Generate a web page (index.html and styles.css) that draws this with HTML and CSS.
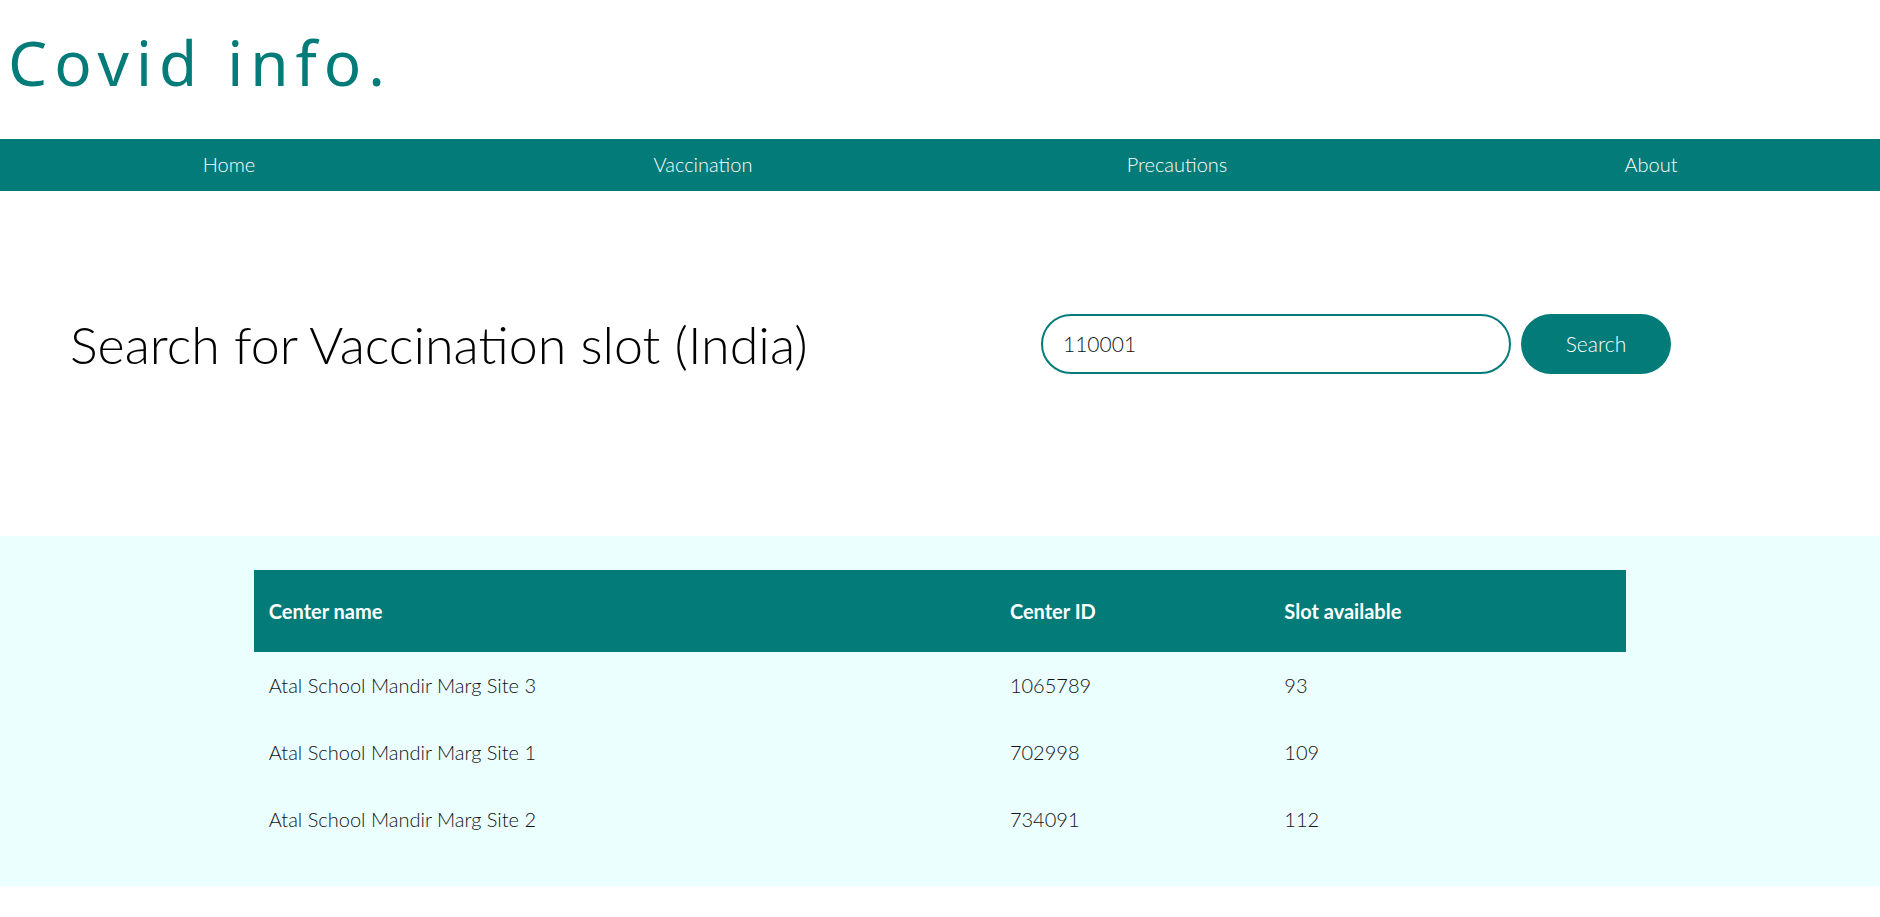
FILE: index.html
```
<!DOCTYPE html>
<html lang="en">
<head>
<meta charset="utf-8">
<title>Covid info.</title>
<link rel="stylesheet" href="styles.css">
</head>
<body>
<header class="site-header">
  <h1 class="logo">Covid info.</h1>
</header>
<nav class="main-nav">
  <ul class="nav-list">
    <li class="nav-item"><a href="#">Home</a></li>
    <li class="nav-item"><a href="#">Vaccination</a></li>
    <li class="nav-item"><a href="#">Precautions</a></li>
    <li class="nav-item"><a href="#">About</a></li>
  </ul>
</nav>
<section class="search-section">
  <div class="search-title-col">
    <h2 class="search-title">Search for Vaccination slot (India)</h2>
  </div>
  <form class="search-form" onsubmit="return false">
    <input class="search-input" type="text" value="110001">
    <button class="search-button" type="submit">Search</button>
  </form>
</section>
<section class="results-section">
  <table class="results-table">
    <thead>
      <tr>
        <th class="col-name">Center name</th>
        <th class="col-id">Center ID</th>
        <th class="col-slot">Slot available</th>
      </tr>
    </thead>
    <tbody>
      <tr><td>Atal School Mandir Marg Site 3</td><td>1065789</td><td>93</td></tr>
      <tr><td>Atal School Mandir Marg Site 1</td><td>702998</td><td>109</td></tr>
      <tr><td>Atal School Mandir Marg Site 2</td><td>734091</td><td>112</td></tr>
    </tbody>
  </table>
</section>
</body>
</html>
```
FILE: styles.css
```
* { box-sizing: border-box; }
html, body { margin: 0; padding: 0; }
body {
  font-family: Lato, "Liberation Sans", sans-serif;
  font-weight: 300;
  color: #000;
  background: #fff;
  overflow-x: hidden;
}
.site-header {
  height: 139px;
  padding: 22px 0 0 8px;
}
.logo {
  margin: 0;
  font-family: "Noto Sans", "DejaVu Sans", sans-serif;
  font-weight: 400;
  font-size: 62px;
  line-height: 80px;
  letter-spacing: 7px;
  color: #027b79;
}
.main-nav {
  background: #027b79;
  height: 52px;
}
.nav-list {
  list-style: none;
  margin: 0 -8px;
  padding: 0 0 3px;
  display: grid;
  grid-template-columns: repeat(4, 1fr);
  height: 100%;
}
.nav-item {
  display: flex;
  align-items: center;
  justify-content: center;
}
.nav-item a {
  color: #fff;
  text-decoration: none;
  font-size: 20px;
  font-weight: 300;
}
.search-section {
  height: 345px;
  display: grid;
  grid-template-columns: 1fr 1fr;
  align-items: center;
  padding-bottom: 40px;
}
.search-title-col { padding-left: 70px; }
.search-title {
  margin: 0;
  font-weight: 300;
  font-size: 52px;
  line-height: 60px;
  color: #000;
}
.search-form {
  display: flex;
  gap: 10px;
  padding-left: 101px;
}
.search-input {
  width: 470px;
  height: 60px;
  border: 2px solid #027b79;
  border-radius: 30px;
  padding: 0 20px;
  font-family: inherit;
  font-weight: 300;
  font-size: 21px;
  color: #111;
  outline: none;
}
.search-button {
  width: 150px;
  height: 60px;
  border: none;
  border-radius: 30px;
  background: #027b79;
  color: #fff;
  font-family: inherit;
  font-weight: 300;
  font-size: 21px;
}
.results-section {
  background: #ebffff;
  padding: 34px 0 33px;
}
.results-table {
  width: 73%;
  margin: 0 auto;
  border-collapse: collapse;
}
.results-table th {
  background: #027b79;
  color: #fff;
  text-align: left;
  font-weight: 700;
  font-size: 20px;
  height: 82px;
  padding: 0 15px;
}
.col-name { width: 54%; }
.col-id { width: 20%; }
.col-slot { width: 26%; }
.results-table td {
  height: 67px;
  padding: 0 15px 2px;
  font-size: 20px;
  color: #111;
}
```
